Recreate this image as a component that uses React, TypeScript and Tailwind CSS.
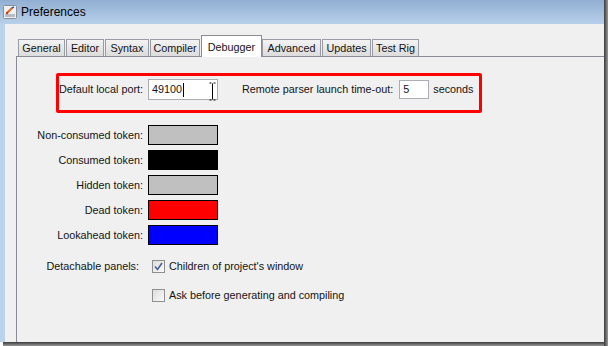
import React from "react"

const tabs = [
  { label: "General", w: 47 },
  { label: "Editor", w: 38 },
  { label: "Syntax", w: 44 },
  { label: "Compiler", w: 50 },
  { label: "Debugger", w: 61, active: true },
  { label: "Advanced", w: 59 },
  { label: "Updates", w: 49 },
  { label: "Test Rig", w: 47 },
]

const tokens = [
  { label: "Non-consumed token:", color: "bg-[#c0c0c0]" },
  { label: "Consumed token:", color: "bg-[#000000]" },
  { label: "Hidden token:", color: "bg-[#c0c0c0]" },
  { label: "Dead token:", color: "bg-[#ff0000]" },
  { label: "Lookahead token:", color: "bg-[#0000ff]" },
]

const AppIcon = () => (
  <svg width="14" height="14" viewBox="0 0 14 14">
    <rect x="0.5" y="0.5" width="13" height="13" rx="1" fill="#eef0f2" stroke="#8a8f96" />
    <rect x="2" y="9" width="10" height="3" fill="#b6bcc4" />
    <path d="M4 8 L9 3" stroke="#e8671c" strokeWidth="2" strokeLinecap="round" />
    <path d="M9 3 L11 2" stroke="#2f5fa8" strokeWidth="1.5" />
    <circle cx="4" cy="8" r="1.2" fill="#c0392b" />
  </svg>
)

const Checkbox = ({ checked }: { checked?: boolean }) => (
  <span className="ml-[4px] w-[13px] h-[13px] border border-[#8e8f8f] bg-gradient-to-br from-[#dcdcdc] to-[#fbfbfb] flex items-center justify-center">
    {checked && (
      <svg width="9" height="9" viewBox="0 0 9 9">
        <path d="M1 4.5 L3.5 7.5 L8 1" fill="none" stroke="#4a5f97" strokeWidth="1.6" />
      </svg>
    )}
  </span>
)

export default function App() {
  return (
    <div className="w-[608px] h-[346px] flex bg-white text-[10.8px] text-[#141414] font-['Liberation_Sans',_Arial,_sans-serif] overflow-hidden">
      <div className="w-[604px] flex flex-col">
        {/* title bar */}
        <div className="h-[24px] flex items-center bg-gradient-to-b from-[#91afd2] to-[#b8d0ea] pl-[3px]">
          <AppIcon />
          <span className="ml-[4px] text-[12px] text-black">Preferences</span>
        </div>
        <div className="flex-1 flex">
          <div className="w-[5px] bg-[#bcd3ec]" />
          <div className="flex-1 bg-[#f0f0f0] pl-[11px] pt-[10px] flex flex-col">
            <div className="h-[22px] flex items-end pl-[2px]">
              {tabs.map((t) =>
                t.active ? (
                  <div
                    key={t.label}
                    style={{ width: t.w }}
                    className="h-[22px] bg-white border border-b-0 border-[#898c95] flex justify-center pt-[3px] -mb-[1px] relative z-10"
                  >
                    {t.label}
                  </div>
                ) : (
                  <div
                    key={t.label}
                    style={{ width: t.w }}
                    className="h-[17px] mr-[1px] bg-gradient-to-b from-[#f3f3f3] to-[#dcdcdc] border border-b-0 border-[#9a9ca3] flex items-center justify-center"
                  >
                    {t.label}
                  </div>
                )
              )}
            </div>
            <div className="flex-1 border-l border-t border-[#898c95] relative">
              {/* annotation */}
              <div className="absolute left-[39px] top-[16px] w-[426px] h-[40px] border-[3px] border-[#ff0000] rounded-[2px] z-10" />
              <div className="pt-[22px] flex flex-col">
                <div className="flex items-center h-[21px]">
                  <span className="w-[126px] text-right">Default local port:</span>
                  <div className="ml-[5px] w-[70px] h-[21px] bg-white border border-[#abadb3] flex items-center pl-[3px] relative">
                    <span>49100</span>
                    <span className="w-[1px] h-[14px] bg-black ml-[1px]" />
                    <svg className="absolute left-[60px] top-[2px]" width="7" height="19" viewBox="0 0 7 19">
                      <path d="M0.5 1 H2.5 M4.5 1 H6.5 M3.5 1.5 V17.5 M0.5 18 H2.5 M4.5 18 H6.5" stroke="#000" strokeWidth="1" fill="none" />
                    </svg>
                  </div>
                  <span className="ml-[24px]">Remote parser launch time-out:</span>
                  <div className="ml-[6px] w-[30px] h-[19px] bg-white border border-[#abadb3] flex items-center pl-[3px]">5</div>
                  <span className="ml-[4px]">seconds</span>
                </div>
                <div className="mt-[25px] flex flex-col gap-[5px]">
                  {tokens.map((t) => (
                    <div key={t.label} className="flex items-center h-[20px]">
                      <span className="w-[126px] text-right">{t.label}</span>
                      <div className={`ml-[5px] w-[70px] h-[20px] border border-black ${t.color}`} />
                    </div>
                  ))}
                </div>
                <div className="mt-[11px] flex items-center h-[20px]">
                  <span className="w-[126px] text-right pr-[4px]">Detachable panels:</span>
                  <div className="ml-[5px] flex items-center">
                    <Checkbox checked />
                    <span className="ml-[4px]">Children of project's window</span>
                  </div>
                </div>
                <div className="mt-[9px] flex items-center h-[20px]">
                  <span className="w-[126px]" />
                  <div className="ml-[5px] flex items-center">
                    <Checkbox />
                    <span className="ml-[4px]">Ask before generating and compiling</span>
                  </div>
                </div>
              </div>
            </div>
          </div>
        </div>
        <div className="h-[4px] bg-gradient-to-b from-[#3c3c3c] to-[#9a9a9a] ml-[3px]" />
      </div>
      <div className="w-[4px] bg-gradient-to-r from-[#3c3c3c] to-[#9a9a9a]" />
    </div>
  )
}
